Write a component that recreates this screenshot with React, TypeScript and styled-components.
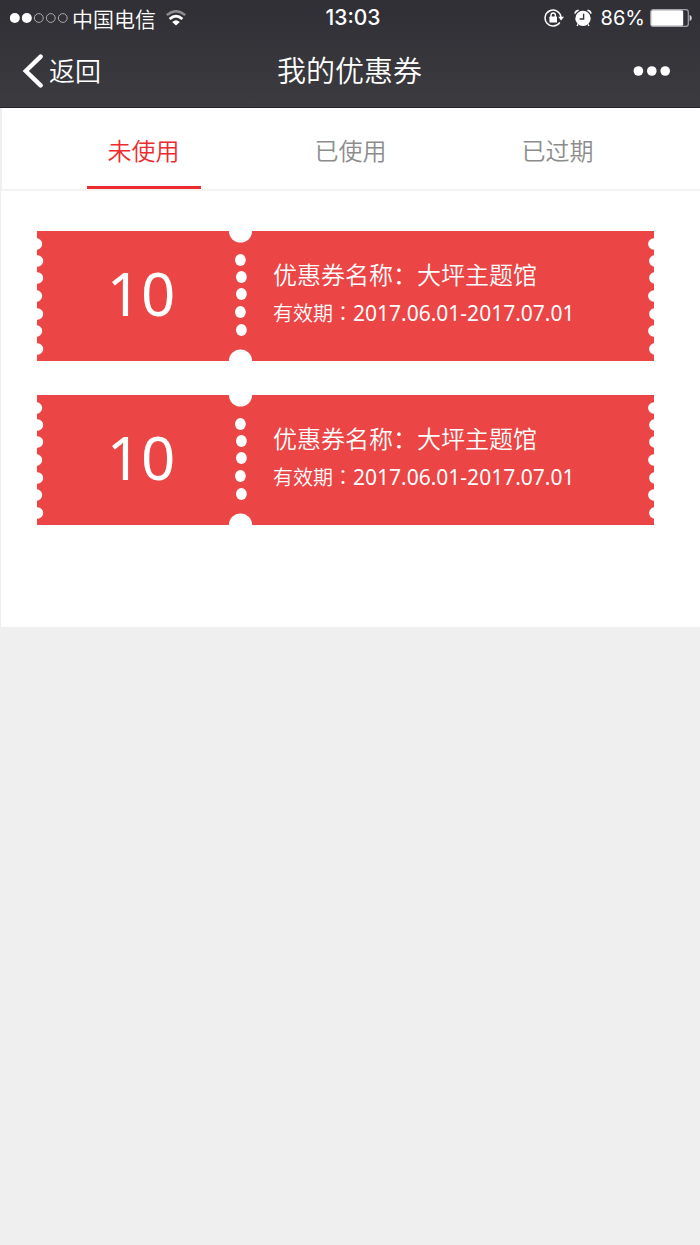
import React, { useState } from "react";
import styled, { createGlobalStyle } from "styled-components";

const GlobalStyle = createGlobalStyle`
  * { box-sizing: border-box; }
  body {
    margin: 0;
    background: #efefef;
    font-family: "Noto Sans", "Noto Sans CJK SC", sans-serif;
  }
  button { font-family: inherit; margin: 0; padding: 0; border: 0; background: none; }
`;

const Header = styled.header`
  color: #fff;
  background: linear-gradient(#302f35, #3c3b40);
  border-bottom: 1px solid #232228;
`;

const StatusBar = styled.div`
  display: grid;
  grid-template-columns: 1fr auto 1fr;
  align-items: center;
  height: 35px;
  padding: 0 8px 0 10px;
  font-size: 20px;
  line-height: 34px;
`;

const StatusGroup = styled.div<{ $end?: boolean }>`
  display: flex;
  align-items: center;
  justify-content: ${(p) => (p.$end ? "flex-end" : "flex-start")};
`;

const Carrier = styled.span`
  margin: 0 9px 0 4px;
  font-family: "Noto Sans CJK SC", sans-serif;
  font-size: 21px;
  font-weight: 350;
  line-height: 32px;
`;

const Clock = styled.time`
  padding-left: 4px;
  font-family: Inter, sans-serif;
  font-size: 21px;
  font-weight: 500;
`;

const Percent = styled.span`
  margin: 0 5px 0 9px;
  font-family: Inter, sans-serif;
`;

const LockSlot = styled.span`
  display: flex;
  margin-right: 10px;
`;

const NavBar = styled.div`
  display: grid;
  grid-template-columns: 1fr auto 1fr;
  align-items: center;
  height: 72px;
  padding: 0 29px 0 22px;
`;

const BackButton = styled.button`
  display: flex;
  align-items: center;
  justify-self: start;
  gap: 5px;
  color: #fff;
  font-size: 26px;
  font-weight: 350;
  line-height: 40px;
`;

const Title = styled.h1`
  margin: 0;
  padding-left: 6px;
  font-size: 29px;
  font-weight: 350;
  line-height: 40px;
`;

const MoreButton = styled.button`
  display: flex;
  justify-self: end;
`;

const Tabs = styled.div`
  display: flex;
  height: 83px;
  padding: 0 39px 0 38px;
  background: #fff;
  border-left: 2px solid #efefef;
  border-bottom: 2px solid #f3f3f3;
`;

const Tab = styled.button<{ $active: boolean }>`
  flex: 1;
  display: flex;
  flex-direction: column;
  align-items: center;
  justify-content: space-between;
  padding-top: 25px;
  color: ${(p) => (p.$active ? "#ed2b2f" : "#8c8c8c")};
  font-size: 24px;
  font-weight: 350;
  line-height: 36px;

  &::after {
    content: "";
    width: 114px;
    height: 3px;
    background: ${(p) => (p.$active ? "#ed2b2f" : "transparent")};
  }
`;

const Panel = styled.main`
  display: flex;
  flex-direction: column;
  gap: 34px;
  padding: 40px 46px 102px 36px;
  background: #fff;
  border-left: 1px solid #efefef;
`;

const Ticket = styled.article`
  display: flex;
  height: 130px;
  color: #fff;
  background: #eb4545;
`;

const Piece = styled.svg`
  flex: none;
  display: block;
`;

const Amount = styled.div`
  flex: none;
  width: 182px;
  padding-left: 10px;
  font-size: 60px;
  line-height: 124px;
  text-align: center;
`;

const Details = styled.div`
  flex: 1;
  padding: 26px 0 0 20px;
`;

const Name = styled.h2`
  margin: 0;
  font-size: 24px;
  font-weight: 350;
  line-height: 36px;
`;

const Validity = styled.p`
  margin: 2px 0 0;
  font-size: 21px;
  line-height: 36px;
`;

const Term = styled.span`
  font-family: "Noto Sans CJK TC", sans-serif;
  font-size: 20px;
  font-weight: 350;
`;

const edgeHoles = [
  [-1, 13], [0, 30], [0, 47], [-1, 65], [0, 83], [-1, 100], [0, 118],
];
const seamHoles = [
  [13, 29], [14, 46], [14, 63], [13, 81], [14, 99],
];

const Edge = ({ right = false }: { right?: boolean }) => (
  <Piece width="8" height="130" viewBox="0 0 8 130" fill="#fff" aria-hidden>
    {edgeHoles.map(([x, y]) => (
      <circle key={y} cx={right ? 8 + x + 0.8 : x + 0.5} cy={y} r="5.7" />
    ))}
  </Piece>
);

const Seam = () => (
  <Piece width="26" height="130" viewBox="0 0 26 130" fill="#fff" aria-hidden>
    <circle cx="13.5" cy="0" r="11.6" />
    <circle cx="13.5" cy="130" r="11.6" />
    {seamHoles.map(([x, y]) => (
      <ellipse key={y} cx={x + 0.4} cy={y} rx="5.4" ry="5.9" />
    ))}
  </Piece>
);

const Signal = () => (
  <svg width="58" height="14" viewBox="0 0 58 14" aria-hidden>
    {[0, 1, 2, 3, 4].map((i) => (
      <circle
        key={i}
        cx={4.8 + i * 12}
        cy="7"
        r={i < 2 ? 5 : 4.4}
        fill={i < 2 ? "#fff" : "none"}
        stroke={i < 2 ? "none" : "#aaa9ad"}
      />
    ))}
  </svg>
);

const Wifi = () => (
  <svg width="22" height="18" viewBox="0 0 22 18" fill="none" aria-hidden>
    <path d="M1.8 6.2Q11 -1.8 20.2 6.2" stroke="#8d8c91" strokeWidth="2.4" />
    <path d="M4.6 10Q11 4.2 17.4 10" stroke="#fff" strokeWidth="2.6" />
    <path d="M7.2 13Q11 9.4 14.8 13L11 16.6Z" fill="#fff" />
  </svg>
);

const RotationLock = () => (
  <svg width="20" height="20" viewBox="0 0 20 20" fill="none" aria-hidden>
    <path d="M15.8 14.4A8 8 0 1 1 17 9" stroke="#fff" strokeWidth="1.5" />
    <path d="M14.2 8.8H20L17.1 12.6Z" fill="#fff" />
    <rect x="5.4" y="8.6" width="7.6" height="6" rx="0.6" fill="#fff" />
    <path d="M7 9.4V7.2A2.2 2.2 0 0 1 11.4 7.2V9.4" stroke="#fff" strokeWidth="1.4" />
  </svg>
);

const Alarm = () => (
  <svg width="18" height="18" viewBox="0 0 18 18" fill="none" aria-hidden>
    <circle cx="9" cy="9.4" r="7.7" fill="#fff" />
    <path d="M1 4.6Q1.4 1.8 4.6 1.2M17 4.6Q16.6 1.8 13.4 1.2" stroke="#fff" strokeWidth="1.6" />
    <path d="M9.6 4.8V10H5.6" stroke="#333238" strokeWidth="1.4" />
    <path d="M4 15.4L3 16.8M14 15.4L15 16.8" stroke="#fff" strokeWidth="1.4" />
  </svg>
);

const Battery = () => (
  <svg width="42" height="18" viewBox="0 0 42 18" fill="none" aria-hidden>
    <rect x="0.7" y="0.7" width="37.6" height="16.6" rx="2.4" stroke="#a5a4a8" strokeWidth="1.2" />
    <rect x="1.2" y="1.2" width="32" height="15.6" rx="1.6" fill="#fff" />
    <path d="M39.6 6Q41.8 6.6 41.8 9T39.6 12Z" fill="#d5d5d7" />
  </svg>
);

const tabs = ["未使用", "已使用", "已过期"];
const coupons = [
  { id: 1, amount: 10, name: "大坪主题馆", dates: "2017.06.01-2017.07.01" },
  { id: 2, amount: 10, name: "大坪主题馆", dates: "2017.06.01-2017.07.01" },
];

export default function App() {
  const [active, setActive] = useState(0);
  return (
    <>
      <GlobalStyle />
      <Header>
        <StatusBar>
          <StatusGroup>
            <Signal />
            <Carrier>中国电信</Carrier>
            <Wifi />
          </StatusGroup>
          <Clock>13:03</Clock>
          <StatusGroup $end>
            <LockSlot>
              <RotationLock />
            </LockSlot>
            <Alarm />
            <Percent>86%</Percent>
            <Battery />
          </StatusGroup>
        </StatusBar>
        <NavBar>
          <BackButton type="button">
            <svg width="22" height="34" viewBox="0 0 22 34" fill="none" aria-hidden>
              <path d="M18.6 2.6L3.8 17L18.6 31.4" stroke="#fff" strokeWidth="4.4" strokeLinecap="round" />
            </svg>
            返回
          </BackButton>
          <Title>我的优惠券</Title>
          <MoreButton type="button" aria-label="更多">
            <svg width="38" height="10" viewBox="0 0 38 10" fill="#fff" aria-hidden>
              <circle cx="5.4" cy="5" r="4.8" />
              <circle cx="18.8" cy="5" r="4.8" />
              <circle cx="32.2" cy="5" r="4.8" />
            </svg>
          </MoreButton>
        </NavBar>
      </Header>
      <Tabs role="tablist">
        {tabs.map((label, i) => (
          <Tab
            key={label}
            type="button"
            role="tab"
            aria-selected={i === active}
            $active={i === active}
            onClick={() => setActive(i)}
          >
            {label}
          </Tab>
        ))}
      </Tabs>
      <Panel>
        {coupons.map((c) => (
          <Ticket key={c.id}>
            <Edge />
            <Amount>{c.amount}</Amount>
            <Seam />
            <Details>
              <Name>优惠券名称：{c.name}</Name>
              <Validity>
                <Term>有效期：</Term>
                {c.dates}
              </Validity>
            </Details>
            <Edge right />
          </Ticket>
        ))}
      </Panel>
    </>
  );
}
